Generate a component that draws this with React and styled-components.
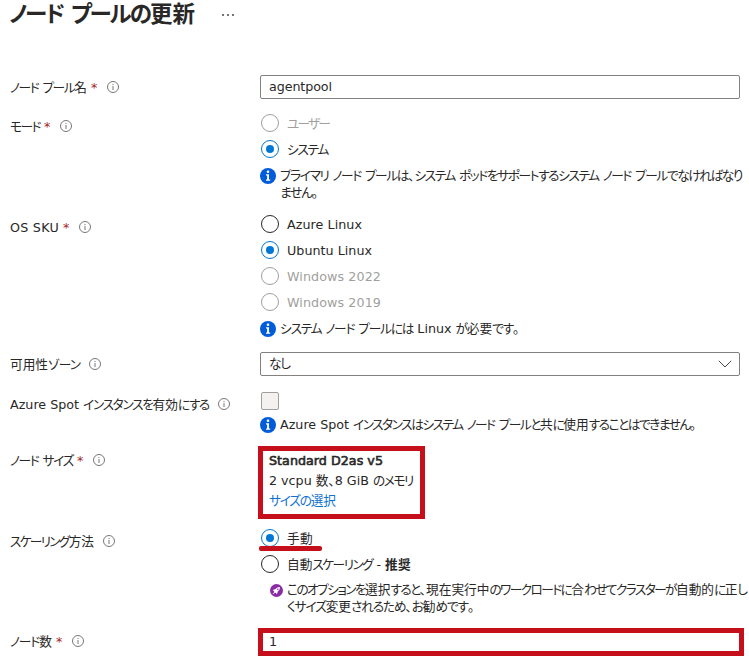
import React, { useLayoutEffect, useRef, useState } from 'react';
import styled, { createGlobalStyle } from 'styled-components';

const GlobalStyle = createGlobalStyle`
  * {
    box-sizing: border-box;
  }

  body {
    margin: 0;
    background: #fff;
    color: #292827;
    font-family: 'DejaVu Sans', 'Noto Sans CJK JP', sans-serif;
    font-size: 12.7px;
    overflow: hidden;
  }
`;

const KANA = /([\u3040-\u30ff]+)/;

// Sets a line to the given width by tightening only its kana
const Text = ({ width, children }) => {
  const ref = useRef(null);
  const [tracking, setTracking] = useState(0);
  const parts = children.split(KANA);
  const hasKana = parts.length > 1;
  const count = hasKana
    ? parts.filter((part, i) => i % 2).join('').length
    : children.length;

  useLayoutEffect(() => {
    const natural = ref.current.getBoundingClientRect().width;
    setTracking((width - natural) / count);
  }, [width, count]);

  return (
    <Line ref={ref}>
      {parts.map((part, i) => (
        <span key={i} style={{ letterSpacing: !hasKana || i % 2 ? tracking : 0 }}>
          {part}
        </span>
      ))}
    </Line>
  );
};

const Line = styled.span`
  display: inline-block;
  flex: none;
  white-space: pre;
  font-feature-settings: 'palt';
`;

const Page = styled.main`
  width: 749px;
  height: 662px;
  padding-left: 10px;
  overflow: hidden;
`;

const Header = styled.header`
  display: flex;
  height: 75px;
`;

const Title = styled.h1`
  margin: 0 0 0 -1px;
  font-size: 22.5px;
  font-weight: 700;
  line-height: 29px;
`;

const More = styled.button`
  display: flex;
  gap: 3px;
  height: 2px;
  margin: 14px 0 0 27px;
  padding: 0;
  border: 0;
  background: none;
`;

const Dot = styled.span`
  width: 2px;
  height: 2px;
  background: #797775;
`;

const Row = styled.div`
  display: grid;
  grid-template-columns: 250px 1fr;
  align-items: start;
  height: ${props => props.$height}px;
`;

const Label = styled.div`
  display: flex;
  align-items: center;
  height: 24px;
  line-height: 22px;

  > span {
    padding-top: 2px;
  }
`;

const Required = styled.span`
  width: 7px;
  margin-left: 4px;
  color: #a4262c;
`;

const HintSvg = styled.svg`
  flex: none;
  margin-left: 9px;
`;

const Hint = () => (
  <HintSvg width="12" height="12" viewBox="0 0 12 12" fill="none" stroke="#797775">
    <circle cx="6" cy="6" r="5.5" />
    <path d="M6 5v4M6 3v1" />
  </HintSvg>
);

const Field = styled.div`
  display: flex;
  flex-direction: column;
  align-items: flex-start;
`;

const Box = styled.div`
  display: flex;
  align-items: center;
  justify-content: space-between;
  width: 480px;
  height: 24px;
  padding: 0 7px 0 8px;
  border: 1px solid #838180;
  border-radius: 2px;
  line-height: 22px;
`;

const Options = styled.div`
  display: flex;
  flex-direction: column;
  gap: 8px;
  padding-left: 1px;
`;

const OptionRow = styled.label`
  display: flex;
  align-items: center;
  gap: 8px;
  height: 18px;
  line-height: 18px;
  color: ${props => (props.$disabled ? '#a19f9d' : 'inherit')};
`;

const OptionText = styled.span`
  padding-top: 2px;
`;

const Circle = styled.span`
  display: flex;
  align-items: center;
  justify-content: center;
  width: 18px;
  height: 18px;
  border: 1px solid
    ${props => (props.$checked ? '#0078d4' : props.$disabled ? '#a19f9d' : '#292827')};
  border-radius: 50%;

  &::after {
    content: '';
    width: 8px;
    height: 8px;
    border-radius: 50%;
    background: ${props => (props.$checked ? '#0078d4' : 'transparent')};
  }
`;

const Option = ({ checked, disabled, children }) => (
  <OptionRow $disabled={disabled}>
    <Circle $checked={checked} $disabled={disabled} />
    <OptionText>{children}</OptionText>
  </OptionRow>
);

const Checkbox = styled.span`
  width: 18px;
  height: 18px;
  margin-left: 1px;
  border: 1px solid #a19f9d;
  border-radius: 2px;
  background: #f3f2f1;
`;

const Note = styled.div`
  display: flex;
  align-items: flex-start;
  gap: 4px;
  margin-top: ${props => props.$top}px;
  line-height: 18px;

  svg {
    flex: none;
    margin-top: 1px;
  }
`;

const NoteLines = styled.div`
  display: flex;
  flex-direction: column;
  align-items: flex-start;
  line-height: 17.4px;
`;

const Info = () => (
  <svg width="16" height="16" viewBox="0 0 16 16">
    <circle cx="8" cy="8" r="8" fill="#015cda" />
    <circle cx="8" cy="3.8" r="1.3" fill="#fff" />
    <path d="M6 6.3h3v5.2h1.2v1.2H6v-1.2h1.1v-4H6z" fill="#fff" />
  </svg>
);

const RecommendNote = styled(Note)`
  padding-left: 10px;

  svg {
    margin-top: 3px;
  }
`;

const Rocket = () => (
  <svg width="13" height="13" viewBox="0 0 13 13">
    <circle cx="6.5" cy="6.5" r="6.5" fill="#8a2da5" />
    <path d="M10 3 7.2 3.5 5.3 5.3 3.6 5.6 3 6.8l1.4.2-.7 1.3.9.9 1.4-.7.2 1.5 1.2-.7.3-1.8 1.8-1.8z" fill="#fff" />
    <path d="m3 9.9.9-.9" stroke="#fff" />
    <circle cx="7.8" cy="5.2" r=".8" fill="#8a2da5" />
  </svg>
);

const SizeCallout = styled.div`
  display: flex;
  flex-direction: column;
  align-items: flex-start;
  width: 167px;
  height: 73px;
  margin: -2px 0 0 -2px;
  padding: 0 6px;
  border: 5px solid #c50f1a;
  line-height: 20px;
`;

const Strong = styled.span`
  -webkit-text-stroke: 0.6px currentColor;
`;

const Bold = styled.span`
  font-weight: 700;
`;

const Link = styled.a`
  color: #0f72d3;
`;

const CountCallout = styled.div`
  display: flex;
  align-items: center;
  width: 486px;
  height: 28px;
  margin: -1px 0 0 -2px;
  padding-left: 6px;
  border: 5px solid #c50f1a;
  line-height: 18px;
`;

const Marked = styled.div`
  position: relative;

  &::after {
    content: '';
    position: absolute;
    left: -2px;
    top: 17px;
    width: 63px;
    height: 5px;
    border-radius: 2px;
    background: #c50f1a;
  }
`;

const FormRow = ({ label, width, required, height, children }) => (
  <Row $height={height}>
    <Label>
      <Text width={width}>{label}</Text>
      {required && <Required>*</Required>}
      <Hint />
    </Label>
    <Field>{children}</Field>
  </Row>
);

const App = () => (
  <>
    <GlobalStyle />
    <Page>
      <Header>
        <Title>
          <Text width={186}>ノード プールの更新</Text>
        </Title>
        <More aria-label="その他">
          <Dot />
          <Dot />
          <Dot />
        </More>
      </Header>

      <FormRow label="ノード プール名" width={77} required height={39}>
        <Box>
          <Text width={63}>agentpool</Text>
        </Box>
      </FormRow>

      <FormRow label="モード" width={30} required height={101}>
        <Options>
          <Option disabled>
            <Text width={42}>ユーザー</Text>
          </Option>
          <Option checked>
            <Text width={41}>システム</Text>
          </Option>
        </Options>
        <Note $top={9}>
          <Info />
          <NoteLines>
            <Text width={462}>
              プライマリ ノード プールは、システム ポッドをサポートするシステム ノード プールでなければなり
            </Text>
            <Text width={38}>ません。</Text>
          </NoteLines>
        </Note>
      </FormRow>

      <FormRow label="OS SKU" width={49} required height={137}>
        <Options>
          <Option>
            <Text width={75}>Azure Linux</Text>
          </Option>
          <Option checked>
            <Text width={85}>Ubuntu Linux</Text>
          </Option>
          <Option disabled>
            <Text width={94}>Windows 2022</Text>
          </Option>
          <Option disabled>
            <Text width={94}>Windows 2019</Text>
          </Option>
        </Options>
        <Note $top={9}>
          <Info />
          <Text width={238}>システム ノード プールには Linux が必要です。</Text>
        </Note>
      </FormRow>

      <FormRow label="可用性ゾーン" width={70} height={40}>
        <Box>
          <Text width={21}>なし</Text>
          <svg width="14" height="8" viewBox="0 0 14 8" fill="none" stroke="#484644">
            <path d="M.8.8 7 7 13.2.8" />
          </svg>
        </Box>
      </FormRow>

      <FormRow label="Azure Spot インスタンスを有効にする" width={199} height={56}>
        <Checkbox />
        <Note $top={6}>
          <Info />
          <Text width={416}>
            Azure Spot インスタンスはシステム ノード プールと共に使用することはできません。
          </Text>
        </Note>
      </FormRow>

      <FormRow label="ノード サイズ" width={63} required height={81}>
        <SizeCallout>
          <Strong>
            <Text width={114}>Standard D2as v5</Text>
          </Strong>
          <Text width={144}>2 vcpu 数、8 GiB のメモリ</Text>
          <Link>
            <Text width={67}>サイズの選択</Text>
          </Link>
        </SizeCallout>
      </FormRow>

      <FormRow label="スケーリング方法" width={84} height={100}>
        <Options>
          <Marked>
            <Option checked>
              <Text width={26}>手動</Text>
            </Option>
          </Marked>
          <Option>
            <Text width={98}>自動スケーリング - </Text>
            <Bold>
              <Text width={26}>推奨</Text>
            </Bold>
          </Option>
        </Options>
        <RecommendNote $top={8}>
          <Rocket />
          <NoteLines>
            <Text width={459}>
              このオプションを選択すると、現在実行中のワークロードに合わせてクラスターが自動的に正し
            </Text>
            <Text width={186}>くサイズ変更されるため、お勧めです。</Text>
          </NoteLines>
        </RecommendNote>
      </FormRow>

      <FormRow label="ノード数" width={42} required height={33}>
        <CountCallout>
          <Text width={8}>1</Text>
        </CountCallout>
      </FormRow>
    </Page>
  </>
);

export default App;
